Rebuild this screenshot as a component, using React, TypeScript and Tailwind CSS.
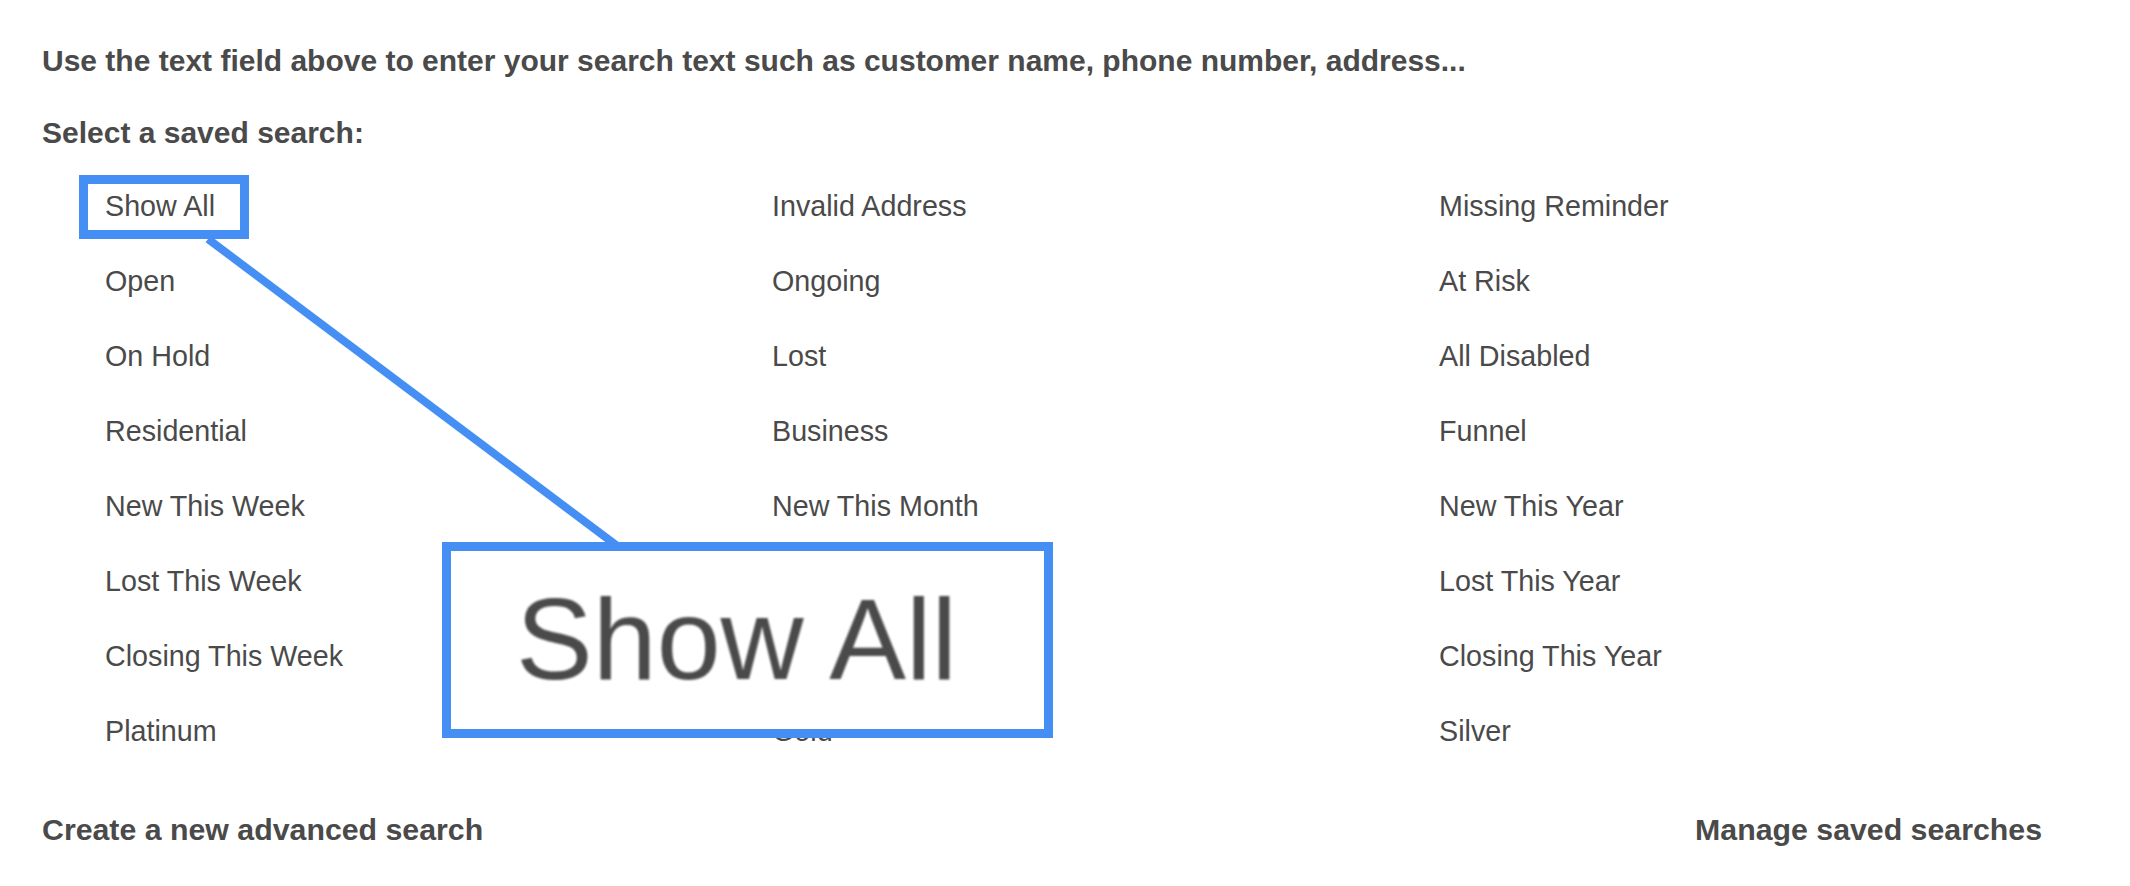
import React from "react";

const rows: [string, string, string][] = [
  ["Show All", "Invalid Address", "Missing Reminder"],
  ["Open", "Ongoing", "At Risk"],
  ["On Hold", "Lost", "All Disabled"],
  ["Residential", "Business", "Funnel"],
  ["New This Week", "New This Month", "New This Year"],
  ["Lost This Week", "Lost This Month", "Lost This Year"],
  ["Closing This Week", "Closing This Month", "Closing This Year"],
  ["Platinum", "Gold", "Silver"],
];

export default function App() {
  return (
    <div
      className="relative w-[2130px] h-[886px] bg-white text-[#4a4a4a] overflow-hidden"
      style={{ fontFamily: '"Liberation Sans", Arial, sans-serif' }}
    >
      <div className="pl-[42px] pr-[88px] pt-[43px]">
        <p className="text-[30px] font-bold leading-[36px]">
          Use the text field above to enter your search text such as customer name, phone number, address...
        </p>
        <p className="mt-[36px] text-[30px] font-bold leading-[36px]">Select a saved search:</p>

        <div className="mt-[18px] pl-[63px] grid grid-cols-[667px_667px_667px]">
          {rows.flat().map((label) => (
            <div key={label} className="h-[75px] flex items-center text-[28.7px] leading-none">
              <span>{label}</span>
            </div>
          ))}
        </div>

        <div className="mt-[43px] flex justify-between text-[30.3px] font-bold leading-[36px]">
          <span>Create a new advanced search</span>
          <span>Manage saved searches</span>
        </div>
      </div>

      {/* annotation overlay */}
      <div className="absolute left-[79px] top-[175px] w-[170px] h-[64px] border-[9px] border-[#448ef4]" />
      <svg className="absolute left-0 top-0 pointer-events-none" width="2130" height="886">
        <line x1="208" y1="239" x2="616" y2="545" stroke="#448ef4" strokeWidth="8" />
      </svg>
      <div className="absolute left-[442px] top-[542px] w-[611px] h-[196px] border-[9px] border-[#448ef4] bg-white flex items-center pl-[65px]">
        <span className="text-[115px] leading-none text-[#4a4a4a] blur-[0.8px] -mt-[2px]">Show All</span>
      </div>
    </div>
  );
}
